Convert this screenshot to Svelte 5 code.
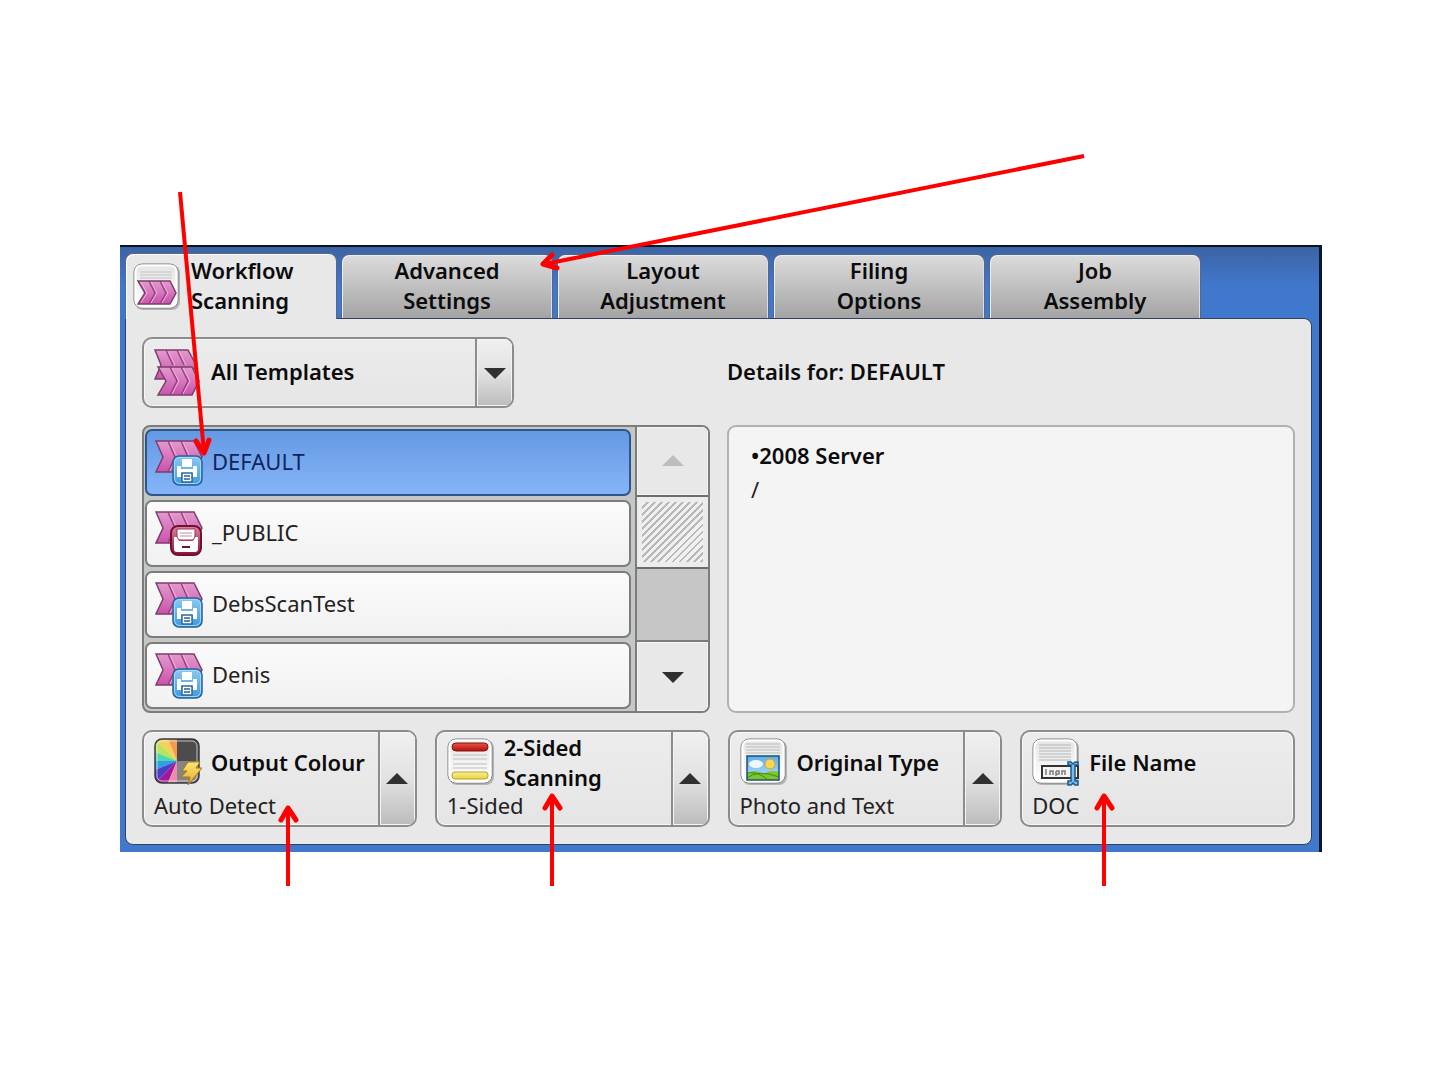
<script lang="ts">
    type Template = {
        name: string;
        badge: 'print' | 'drawer';
    };

    type Option = {
        title: string;
        value: string;
        icon: string;
        menu: boolean;
    };

    let tabs = ['Workflow Scanning', 'Advanced Settings', 'Layout Adjustment', 'Filing Options', 'Job Assembly'];
    let templates: Template[] = [
        {name: 'DEFAULT', badge: 'print'},
        {name: '_PUBLIC', badge: 'drawer'},
        {name: 'DebsScanTest', badge: 'print'},
        {name: 'Denis', badge: 'print'}
    ];
    let options: Option[] = [
        {title: 'Output Colour', value: 'Auto Detect', icon: 'colour', menu: true},
        {title: '2-Sided Scanning', value: '1-Sided', icon: 'sides', menu: true},
        {title: 'Original Type', value: 'Photo and Text', icon: 'photo', menu: true},
        {title: 'File Name', value: 'DOC', icon: 'name', menu: false}
    ];
    let wheel = ['#f39a55', '#f8cf58', '#b9e45c', '#4fd8b0', '#2f9fe8', '#4a3fc4', '#a0189c', '#ee8ab0'];

    let activeTab = $state(0);
    let selected = $state('DEFAULT');

    // one slice of the colour half-wheel, drawn long and clipped by the icon frame
    function slice(i: number) {
        let from = (-90 - i * 22.5) * Math.PI / 180;
        let to = (-112.5 - i * 22.5) * Math.PI / 180;
        let x = (a: number) => (23 + 40 * Math.cos(a)).toFixed(1);
        let y = (a: number) => (23 + 40 * Math.sin(a)).toFixed(1);
        return `23,23 ${x(from)},${y(from)} ${x(to)},${y(to)}`;
    }
</script>

<svelte:head>
    <title>Workflow Scanning</title>
</svelte:head>

<svg class="defs" aria-hidden="true">
    <defs>
        <linearGradient id="pink" x1="0" y1="0" x2="0" y2="1">
            <stop offset="0" stop-color="#e39acd" />
            <stop offset="1" stop-color="#cb52ad" />
        </linearGradient>
        <linearGradient id="paper" x1="0" y1="0" x2="0" y2="1">
            <stop offset="0" stop-color="#e4e4e4" />
            <stop offset="1" stop-color="#ffffff" />
        </linearGradient>
        <linearGradient id="blue" x1="0" y1="0" x2="0" y2="1">
            <stop offset="0" stop-color="#8cc8f0" />
            <stop offset="1" stop-color="#3f9ade" />
        </linearGradient>
        <linearGradient id="wine" x1="0" y1="0" x2="0" y2="1">
            <stop offset="0" stop-color="#d9889f" />
            <stop offset="1" stop-color="#8c1238" />
        </linearGradient>
        <linearGradient id="bolt" x1="0" y1="0" x2="0" y2="1">
            <stop offset="0" stop-color="#fbe67a" />
            <stop offset="1" stop-color="#e5a91c" />
        </linearGradient>
        <linearGradient id="red" x1="0" y1="0" x2="0" y2="1">
            <stop offset="0" stop-color="#e8564a" />
            <stop offset="1" stop-color="#b3100c" />
        </linearGradient>
        <linearGradient id="yellow" x1="0" y1="0" x2="0" y2="1">
            <stop offset="0" stop-color="#f7ee9c" />
            <stop offset="1" stop-color="#ecd338" />
        </linearGradient>
        <linearGradient id="sky" x1="0" y1="0" x2="0" y2="1">
            <stop offset="0" stop-color="#5aaef0" />
            <stop offset="1" stop-color="#b9e0fa" />
        </linearGradient>
        <clipPath id="frame"><rect x="1" y="1" width="44" height="44" rx="7" /></clipPath>
    </defs>
</svg>

{#snippet sheet()}
    <rect x="2" y="2" width="45" height="45" rx="8" fill="#b4b4b4" />
    <rect x="1" y="1" width="44" height="44" rx="8" fill="url(#paper)" stroke="#7b7b7b" />
    <rect x="2.5" y="2.5" width="41" height="41" rx="6" fill="none" stroke="#fff" stroke-width="2" />
{/snippet}

<main class="slide">
    <div class="screen">
        <div class="tabs" role="tablist">
            {#each tabs as tab, i}
                <button class="tab" class:active={activeTab == i} role="tab" aria-selected={activeTab == i} onclick={() => activeTab = i}>
                    {#if i == 0}
                        <svg class="icon" viewBox="0 0 48 48" aria-hidden="true">
                            {@render sheet()}
                            <path d="M7 9H39M7 12H39M7 15H39" stroke="#c2c2c2" />
                            <path d="M5 18H37L43 30L37 41H5L12 30Z" fill="url(#pink)" stroke="#7c3e6c" stroke-width="1.5" />
                            <path d="M16 18L22 30L16 41M27 18L33 30L27 41" fill="none" stroke="#93437e" stroke-width="1.5" />
                            <path d="M18 19L24 30L18 40M29 19L35 30L29 40M8 19L14 30L8 40" fill="none" stroke="#efb4dd" />
                        </svg>
                    {/if}
                    <span class="tab-label">{tab}</span>
                </button>
            {/each}
        </div>

        <div class="body">
            <div class="top">
                <div class="picker">
                    <svg class="icon" viewBox="0 0 48 48" aria-hidden="true">
                        <path d="M1 1H34L42 16L35 30H1L7 16Z" fill="url(#pink)" stroke="#7c3e6c" stroke-width="1.5" />
                        <path d="M12 1L19 16M23 1L30 16" fill="none" stroke="#93437e" stroke-width="1.5" />
                        <path d="M14 2L21 16M25 2L32 16" fill="none" stroke="#efb4dd" />
                        <path d="M4 18H38L45 32L38 46H4L12 32Z" fill="url(#pink)" stroke="#7c3e6c" stroke-width="1.5" />
                        <path d="M16 18L23 32L16 46M27 18L34 32L27 46" fill="none" stroke="#93437e" stroke-width="1.5" />
                        <path d="M18 19L25 32L18 45M29 19L36 32L29 45" fill="none" stroke="#efb4dd" />
                    </svg>
                    <select class="picker-select" aria-label="Templates">
                        <option>All Templates</option>
                    </select>
                    <span class="picker-arrow">
                        <svg class="triangle" viewBox="0 0 22 12" aria-hidden="true"><path d="M0 1H22L11 12Z" /></svg>
                    </span>
                </div>
                <h2 class="details-title">Details for: {selected}</h2>
            </div>

            <div class="middle">
                <div class="list">
                    <div class="items">
                        {#each templates as template}
                            <button class="item" class:selected={selected == template.name} onclick={() => selected = template.name}>
                                <svg class="icon" viewBox="0 0 48 48" aria-hidden="true">
                                    <path d="M1 2H39L47 18L39 33H1L8 18Z" fill="url(#pink)" stroke="#7c3e6c" stroke-width="1.5" />
                                    <path d="M13 2L20 18L13 33M26 2L33 18" fill="none" stroke="#93437e" stroke-width="1.5" />
                                    <path d="M15 3L22 18L15 32M28 3L34 16" fill="none" stroke="#efb4dd" />
                                    {#if template.badge == 'print'}
                                        <rect x="18" y="17" width="29" height="29" rx="6" fill="url(#blue)" stroke="#23659c" stroke-width="1.5" />
                                        <rect x="19.5" y="18.5" width="26" height="26" rx="5" fill="none" stroke="#a5dafa" />
                                        <path d="M27 20H37V28H27Z" fill="#fff" />
                                        <path d="M22 27H26V30H38V27H42V38H38V34H26V38H22Z" fill="#fff" />
                                        <path d="M27 34H37V43H27Z" fill="#fff" stroke="#2a6a9c" stroke-width="1.5" />
                                        <path d="M29 37H35M29 40H35" stroke="#2a5f8c" stroke-width="1.5" />
                                    {:else}
                                        <rect x="16" y="16" width="30" height="29" rx="7" fill="url(#wine)" stroke="#74102f" stroke-width="2" />
                                        <path d="M19 27H22L24 31H38L40 27H43V39Q43 42 40 42H22Q19 42 19 39Z" fill="#fff" />
                                        <path d="M22 19H40V25Q40 30 36 30H26Q22 30 22 25Z" fill="#fff" stroke="#a33457" />
                                        <path d="M25 23H37M25 26H37" stroke="#b9919c" />
                                        <path d="M27 37H35" stroke="#5c1a2c" stroke-width="2" />
                                    {/if}
                                </svg>
                                <span class="item-name">{template.name}</span>
                            </button>
                        {/each}
                    </div>
                    <div class="scroll">
                        <button class="scroll-button up" aria-label="Scroll up" disabled>
                            <svg class="triangle" viewBox="0 0 22 12" aria-hidden="true"><path d="M0 11H22L11 0Z" /></svg>
                        </button>
                        <div class="thumb"></div>
                        <div class="track"></div>
                        <button class="scroll-button" aria-label="Scroll down">
                            <svg class="triangle" viewBox="0 0 22 12" aria-hidden="true"><path d="M0 1H22L11 12Z" /></svg>
                        </button>
                    </div>
                </div>
                <div class="details">
                    <p class="server">•2008 Server</p>
                    <p>/</p>
                </div>
            </div>

            <div class="options">
                {#each options as option}
                    <button class="option">
                        <span class="option-main">
                            <span class="option-head">
                                <svg class="icon" viewBox="0 0 48 48" aria-hidden="true">
                                    {#if option.icon == 'colour'}
                                        <g clip-path="url(#frame)">
                                            {#each wheel as colour, n}
                                                <polygon points={slice(n)} fill={colour} />
                                            {/each}
                                            <path d="M23 0H48V23H23Z" fill="#4c4c4c" />
                                            <path d="M23 23H48V48H23Z" fill="#858585" />
                                        </g>
                                        <rect x="1" y="1" width="44" height="44" rx="7" fill="none" stroke="#3a3a3a" stroke-width="1.5" />
                                        <rect x="3" y="3" width="40" height="40" rx="5" fill="none" stroke="#f0f0f0" stroke-opacity=".7" />
                                        <path d="M34 24H46L42 30H48L34 47L36 39H27L33 33H28Z" fill="url(#bolt)" stroke="#a7771a" />
                                    {:else if option.icon == 'sides'}
                                        {@render sheet()}
                                        <rect x="5" y="5" width="36" height="8" rx="4" fill="url(#red)" stroke="#8c1510" />
                                        <path d="M6 17H40M6 21H40M6 26H40M6 30H40" stroke="#bdbdbd" />
                                        <rect x="5" y="34" width="36" height="7" rx="3" fill="url(#yellow)" stroke="#bfa22c" />
                                    {:else if option.icon == 'photo'}
                                        {@render sheet()}
                                        <path d="M6 6H40M6 9H40M6 12H40M6 15H40" stroke="#bdbdbd" />
                                        <rect x="7" y="18" width="32" height="24" fill="url(#sky)" />
                                        <ellipse cx="16" cy="26" rx="7" ry="4" fill="#eef8ff" />
                                        <circle cx="30" cy="26" r="5" fill="#f6d858" stroke="#d8a52c" />
                                        <path d="M7 36Q15 30 23 36Q31 31 39 34V42H7Z" fill="#7fc62c" />
                                        <path d="M7 40Q18 31 39 39M7 35Q17 33 27 41" fill="none" stroke="#3f8c1c" />
                                        <rect x="7" y="18" width="32" height="24" fill="none" stroke="#1c5078" stroke-width="1.5" />
                                    {:else}
                                        {@render sheet()}
                                        <path d="M7 7H39M7 10H39M7 13H39M7 16H39M7 19H39M7 22H39" stroke="#b5b5b5" />
                                        <rect x="10" y="28" width="36" height="12" fill="#f4f4f4" stroke="#333" stroke-width="2" />
                                        <path d="M14 31V37M18 37V33H21V37M24 33V38M24 33H27V36H24M30 37V33H33V37" fill="none" stroke="#7c7c7c" stroke-width="1.5" />
                                        <path d="M36 24H39L41 26L43 24H46V27H43V43H46V47H43L41 45L39 47H36V43H39V27H36Z" fill="#79bce8" stroke="#1a588f" stroke-width="1.5" />
                                    {/if}
                                </svg>
                                <span class="option-title">{option.title}</span>
                            </span>
                            <span class="option-value">{option.value}</span>
                        </span>
                        {#if option.menu}
                            <span class="option-arrow">
                                <svg class="triangle" viewBox="0 0 22 12" aria-hidden="true"><path d="M0 11H22L11 0Z" /></svg>
                            </span>
                        {/if}
                    </button>
                {/each}
            </div>
        </div>
    </div>

    <!-- callout arrows over the panel -->
    <svg class="arrows" viewBox="0 0 1440 1080" aria-hidden="true">
        <path d="M180 192L204 452" />
        <path d="M1084 156L545 264" />
        <path d="M288 886V809M552 886V797M1104 886V797" />
        <g class="heads">
            <path d="M196 441L204 453L209 440" />
            <path d="M552 255L543 264L557 268" />
            <path d="M281 820L288 808L296 820" />
            <path d="M545 808L552 796L560 808" />
            <path d="M1097 808L1104 796L1112 808" />
        </g>
    </svg>
</main>

<style>
    :global(body) {
        background-color: white;
    }

    .defs {
        position: absolute;
        width: 0;
        height: 0;
    }

    .slide {
        position: relative;
        box-sizing: border-box;
        min-height: 100vh;
        padding: 245px 118px 100px 120px;
        font-family: "Noto Sans", "Open Sans", sans-serif;
        font-size: 22px;
        line-height: 30px;
        color: #222;
    }

    .slide * {
        box-sizing: border-box;
    }

    button, select {
        font: inherit;
        color: inherit;
        text-align: left;
        padding: 0;
        margin: 0;
        border: none;
        background: none;
        cursor: pointer;
    }

    .screen {
        padding: 6px 7px 7px 5px;
        border-top: 2px solid #0c1420;
        border-right: 3px solid #0c1830;
        background: linear-gradient(#3c64a4, #4078ce 40px);
    }

    .tabs {
        display: grid;
        grid-template-columns: repeat(5, 212px);
        gap: 4px;
    }

    .tab {
        display: flex;
        align-items: center;
        justify-content: center;
        height: 64px;
        margin-top: 1px;
        border: 1px solid #55678a;
        border-bottom: none;
        border-radius: 8px 8px 0 0;
        background: linear-gradient(#dcdcdc, #a4a4a4);
        box-shadow: inset 1px 1px 0 #eee, inset -1px 0 0 #ddd;
        color: #0c0c0c;
        font-weight: 600;
        text-align: center;
    }

    .tab.active {
        justify-content: flex-start;
        gap: 10px;
        height: 66px;
        margin: 0 0 -1px;
        padding-left: 7px;
        background: #e8e8e8;
        box-shadow: inset 1px 1px 0 #fff;
        text-align: left;
        z-index: 1;
    }

    .tab-label {
        width: min-content;
        padding-bottom: 4px;
    }

    .icon {
        flex: none;
        width: 48px;
        height: 48px;
    }

    .body {
        display: grid;
        gap: 17px;
        padding: 18px 16px 17px 16px;
        border: 1px solid #33415a;
        border-radius: 0 8px 8px 8px;
        background-color: #e8e8e8;
    }

    .top, .middle {
        display: grid;
        grid-template-columns: 1fr 1fr;
        gap: 17px;
        align-items: center;
    }

    .picker, .option {
        border: 2px solid #8c8c8c;
        border-radius: 10px;
        background: linear-gradient(#ececec, #e5e5e5);
        box-shadow: inset 0 0 0 1px #f8f8f8;
        overflow: hidden;
    }

    .picker {
        display: flex;
        align-items: center;
        width: 372px;
        height: 71px;
        padding-left: 10px;
    }

    .picker-select {
        flex: 1;
        height: 100%;
        padding: 0 0 4px 9px;
        appearance: none;
        color: #0c0c0c;
        font-weight: 600;
    }

    .picker-arrow, .option-arrow {
        display: flex;
        flex: none;
        align-items: center;
        justify-content: center;
        align-self: stretch;
        width: 37px;
        border-left: 2px solid #8c8c8c;
        background: linear-gradient(#f0f0f0, #e2e2e2 50%, #bcbcbc);
        box-shadow: inset 0 0 0 1px #f4f4f4;
    }

    .triangle {
        width: 22px;
        height: 12px;
        fill: #303030;
    }

    .details-title {
        margin: 0;
        padding-bottom: 4px;
        color: #0c0c0c;
        font-size: 22px;
        font-weight: 600;
    }

    .list {
        display: grid;
        grid-template-columns: 1fr 73px;
        height: 288px;
        border: 2px solid #7c7c7c;
        border-radius: 8px;
        background-color: #c4c8c4;
        overflow: hidden;
    }

    .items {
        display: grid;
        grid-template-rows: repeat(4, 1fr);
        gap: 4px;
        padding: 2px 4px 2px 1px;
    }

    .item {
        display: flex;
        align-items: center;
        gap: 9px;
        padding: 0 8px;
        border: 2px solid #7c7c7c;
        border-radius: 7px;
        background: linear-gradient(#fbfbfb, #f1f1f1);
    }

    .item.selected {
        border-color: #2d568c;
        background: linear-gradient(#6699e4, #85b5f8);
        color: #10245c;
    }

    .item-name {
        padding-bottom: 4px;
    }

    .scroll {
        display: grid;
        grid-template-rows: 68px 74px 1fr 69px;
        border-left: 2px solid #7c7c7c;
    }

    .scroll-button {
        display: flex;
        align-items: center;
        justify-content: center;
        background-color: #e8e8e8;
        box-shadow: inset 0 0 0 1px #f4f4f4;
    }

    .scroll-button.up .triangle {
        fill: #bdbdbd;
    }

    .thumb {
        padding: 5px;
        border-top: 2px solid #6c6c6c;
        border-bottom: 2px solid #6c6c6c;
        background: repeating-linear-gradient(135deg, #f0f0f0 0 3px, #b8b8b8 3px 5px) content-box, #ececec;
    }

    .track {
        border-bottom: 2px solid #7c7c7c;
        background-color: #c6c6c6;
    }

    .details {
        height: 100%;
        padding: 11px 22px;
        border: 2px solid #b2b2b2;
        border-radius: 9px;
        background-color: #f4f4f4;
        line-height: 34px;
    }

    .details p {
        margin: 0;
    }

    .details .server {
        color: #0c0c0c;
        font-weight: 600;
    }

    .options {
        display: grid;
        grid-template-columns: repeat(4, 1fr);
        gap: 18px;
    }

    .option {
        display: flex;
        height: 97px;
    }

    .option-main {
        display: flex;
        flex: 1;
        flex-direction: column;
        padding-left: 10px;
    }

    .option-head {
        display: flex;
        align-items: center;
        gap: 9px;
        height: 60px;
    }

    .option-title {
        color: #0c0c0c;
        font-weight: 600;
    }

    .option-value {
        line-height: 26px;
    }

    .arrows {
        position: absolute;
        z-index: 2;
        top: 0;
        left: 0;
        width: 100%;
        fill: none;
        stroke: #f00;
        stroke-width: 4;
        pointer-events: none;
    }

    .heads {
        stroke-width: 5;
        stroke-linecap: round;
        stroke-linejoin: round;
    }
</style>
